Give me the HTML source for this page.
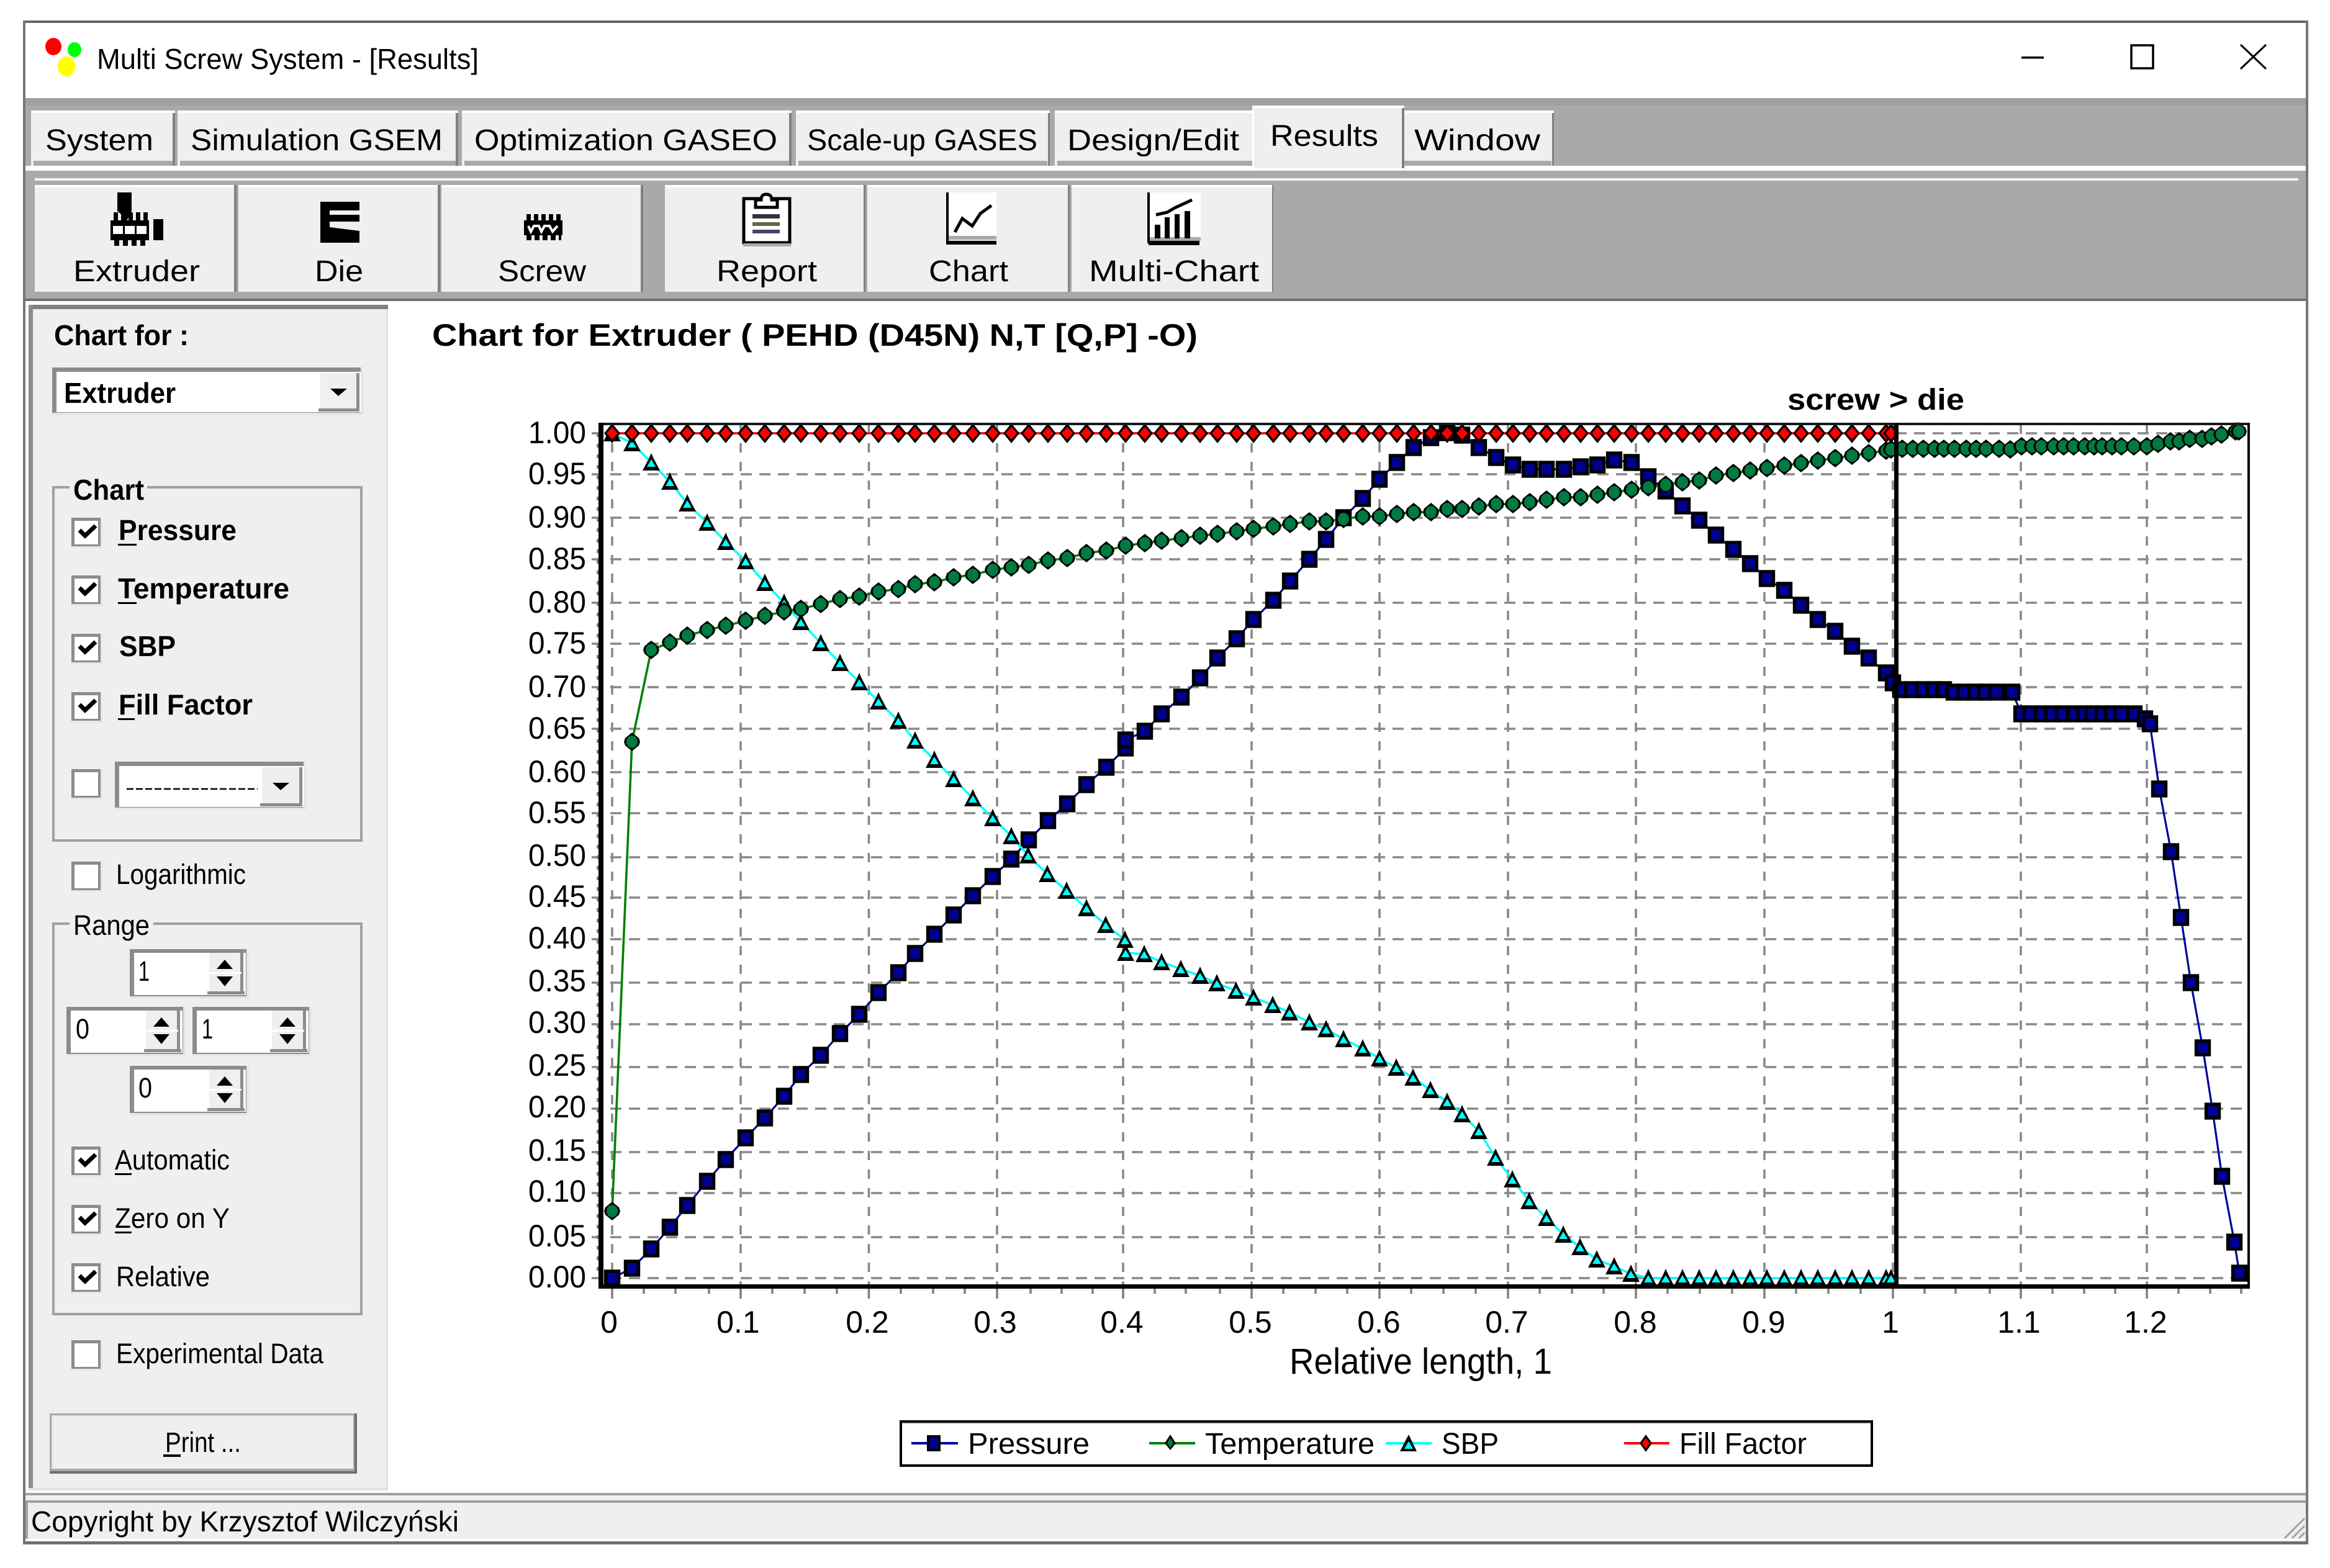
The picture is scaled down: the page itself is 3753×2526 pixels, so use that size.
<!DOCTYPE html>
<html lang="en"><head><meta charset="utf-8"><title>Multi Screw System - [Results]</title>
<style>
html,body{margin:0;padding:0;background:#fff;width:3753px;height:2526px;overflow:hidden}
svg{display:block}
text{font-family:"Liberation Sans","Noto Sans CJK SC",sans-serif;fill:#000}
.b{font-weight:bold}
</style></head><body>
<svg xmlns="http://www.w3.org/2000/svg" width="3753" height="2526" viewBox="0 0 3753 2526">
<defs>
<marker id="ms" markerUnits="userSpaceOnUse" markerWidth="30" markerHeight="30" refX="15" refY="15" overflow="visible"><rect x="4.5" y="4" width="21" height="22" fill="#000090" stroke="#000" stroke-width="5.4"/></marker>
<marker id="mt" markerUnits="userSpaceOnUse" markerWidth="30" markerHeight="30" refX="15" refY="15" overflow="visible"><polygon points="15,0 19,9 29,28 1,28 11,9" fill="#000"/><polygon points="15,10 22,22 8,22" fill="#00ffff"/></marker>
<marker id="mg" markerUnits="userSpaceOnUse" markerWidth="30" markerHeight="30" refX="15" refY="15" overflow="visible"><polygon points="15,0 26,9 28,15 26,21 15,30 4,21 2,15 4,9" fill="#000"/><ellipse cx="15" cy="15" rx="9" ry="10" fill="#007a40"/></marker>
<marker id="mr" markerUnits="userSpaceOnUse" markerWidth="30" markerHeight="30" refX="15" refY="15" overflow="visible"><polygon points="15,-1 28,15 15,31 2,15" fill="#000"/><polygon points="15,5 24,15 15,25 6,15" fill="#ff0000"/></marker>
<g id="cb"><rect x="0" y="0" width="50" height="49" fill="#e6e6e6"/><rect x="0" y="0" width="47" height="46" fill="#8c8c8c"/><rect x="5" y="5" width="38" height="38" fill="#fff"/></g>
<g id="ck"><use href="#cb"/><polyline points="13,20 22,29 39,13" fill="none" stroke="#000" stroke-width="7"/></g>
<g id="spin"><rect x="0" y="0" width="192" height="80" fill="#e6e6e6"/><rect x="0" y="0" width="188" height="76" fill="#8c8c8c"/><rect x="7" y="6" width="180" height="68" fill="#fff"/><rect x="128" y="6" width="54" height="66" fill="#efefef"/><rect x="125" y="68" width="60" height="5" fill="#8c8c8c"/><rect x="178" y="6" width="5" height="66" fill="#8c8c8c"/><rect x="128" y="37" width="52" height="3" fill="#fff"/><polygon points="153,17 166,32 140,32" fill="#000"/><polygon points="140,44 166,44 153,60" fill="#000"/></g>
</defs>

<!-- window frame -->
<rect x="37" y="33" width="3681" height="2455" fill="#fff"/>
<rect x="37" y="33" width="3681" height="4" fill="#666"/>
<rect x="37" y="33" width="4" height="2455" fill="#777"/>
<rect x="3714" y="33" width="4" height="2455" fill="#777"/>

<!-- title bar -->
<ellipse cx="86" cy="75" rx="13" ry="14" fill="#ff0000"/>
<ellipse cx="120" cy="80" rx="11" ry="12" fill="#00ff00"/>
<ellipse cx="107" cy="107" rx="14" ry="16" fill="#ffff00"/>
<text x="156" y="111" font-size="46" textLength="615" lengthAdjust="spacingAndGlyphs">Multi Screw System - [Results]</text>
<rect x="3256" y="91" width="36" height="3.5" fill="#000"/>
<rect x="3433" y="73" width="35" height="37" fill="none" stroke="#000" stroke-width="3.5"/>
<path d="M3609 72L3650 111M3650 72L3609 111" stroke="#000" stroke-width="3" fill="none"/>

<!-- grey menu and toolbar area -->
<rect x="41" y="158" width="3673" height="323" fill="#a9a9a9"/>
<rect x="41" y="158" width="3673" height="12" fill="#a0a0a0"/>
<rect x="41" y="267" width="3673" height="8" fill="#fff"/>
<rect x="56" y="287" width="3646" height="4" fill="#f4f4f4"/>
<rect x="41" y="481" width="3673" height="4" fill="#707070"/>

<!-- tabs -->
<g fill="#efefef">
<rect x="50" y="178" width="232" height="89"/><rect x="286" y="178" width="452" height="89"/><rect x="744" y="178" width="531" height="89"/><rect x="1282" y="178" width="409" height="89"/><rect x="1699" y="178" width="318" height="89"/><rect x="2262" y="178" width="241" height="89"/>
<rect x="2017" y="170" width="245" height="101"/>
</g>
<g fill="#fff">
<rect x="50" y="178" width="232" height="4"/><rect x="286" y="178" width="452" height="4"/><rect x="744" y="178" width="531" height="4"/><rect x="1282" y="178" width="409" height="4"/><rect x="1699" y="178" width="318" height="4"/><rect x="2262" y="178" width="241" height="4"/><rect x="2017" y="170" width="245" height="4"/><rect x="2017" y="170" width="3" height="101"/>
</g>
<g fill="#a9a9a9">
<rect x="54" y="259" width="224" height="8"/><rect x="290" y="259" width="444" height="8"/><rect x="748" y="259" width="523" height="8"/><rect x="1286" y="259" width="401" height="8"/><rect x="1703" y="259" width="314" height="8"/><rect x="2262" y="259" width="237" height="8"/>
</g>
<g fill="#808080">
<rect x="278" y="182" width="4" height="85"/><rect x="734" y="182" width="4" height="85"/><rect x="1271" y="182" width="4" height="85"/><rect x="1688" y="182" width="3" height="85"/><rect x="2258" y="174" width="4" height="97"/><rect x="2500" y="182" width="3" height="85"/>
</g>
<g font-size="48">
<text x="73" y="242" textLength="174" lengthAdjust="spacingAndGlyphs">System</text>
<text x="307" y="242" textLength="406" lengthAdjust="spacingAndGlyphs">Simulation GSEM</text>
<text x="764" y="242" textLength="488" lengthAdjust="spacingAndGlyphs">Optimization GASEO</text>
<text x="1300" y="242" textLength="371" lengthAdjust="spacingAndGlyphs">Scale-up GASES</text>
<text x="1719" y="242" textLength="277" lengthAdjust="spacingAndGlyphs">Design/Edit</text>
<text x="2046" y="235" textLength="174" lengthAdjust="spacingAndGlyphs">Results</text>
<text x="2278" y="242" textLength="203" lengthAdjust="spacingAndGlyphs">Window</text>
</g>

<!-- toolbar buttons -->
<g fill="#efefef">
<rect x="56" y="298" width="325" height="172"/><rect x="384" y="298" width="325" height="172"/><rect x="711" y="298" width="325" height="172"/><rect x="1071" y="298" width="323" height="172"/><rect x="1397" y="298" width="325" height="172"/><rect x="1726" y="298" width="325" height="172"/>
</g>
<g fill="#fff">
<rect x="56" y="298" width="325" height="4"/><rect x="384" y="298" width="325" height="4"/><rect x="711" y="298" width="325" height="4"/><rect x="1071" y="298" width="323" height="4"/><rect x="1397" y="298" width="325" height="4"/><rect x="1726" y="298" width="325" height="4"/>
</g>
<g fill="#808080">
<rect x="377" y="298" width="4" height="172"/><rect x="705" y="298" width="4" height="172"/><rect x="1032" y="298" width="4" height="172"/><rect x="1391" y="298" width="3" height="172"/><rect x="1720" y="298" width="3" height="172"/><rect x="2049" y="298" width="2" height="172"/>
</g>
<g font-size="48">
<text x="118" y="453" textLength="204" lengthAdjust="spacingAndGlyphs">Extruder</text>
<text x="507" y="453" textLength="78" lengthAdjust="spacingAndGlyphs">Die</text>
<text x="802" y="453" textLength="142" lengthAdjust="spacingAndGlyphs">Screw</text>
<text x="1154" y="453" textLength="162" lengthAdjust="spacingAndGlyphs">Report</text>
<text x="1496" y="453" textLength="128" lengthAdjust="spacingAndGlyphs">Chart</text>
<text x="1754" y="453" textLength="274" lengthAdjust="spacingAndGlyphs">Multi-Chart</text>
</g>

<!-- extruder icon -->
<rect x="189" y="310" width="23" height="30"/>
<polygon points="189,340 212,340 203,358 198,350 198,348"/>
<path d="M183 349H238" stroke="#000" stroke-width="14" stroke-dasharray="7 5" fill="none"/>
<rect x="178" y="355" width="62" height="32"/>
<path d="M184 390H238" stroke="#000" stroke-width="12" stroke-dasharray="8 6" fill="none"/>
<g fill="#fff"><rect x="182" y="364" width="16" height="13"/><rect x="201" y="364" width="16" height="13"/><rect x="220" y="364" width="16" height="13"/></g>
<rect x="247" y="353" width="16" height="34"/>

<!-- die icon -->
<rect x="516" y="325" width="63" height="14"/>
<rect x="516" y="339" width="15" height="34"/>
<rect x="531" y="346" width="48" height="11"/>
<polygon points="516,372 531,366 579,372 579,391 516,391"/>

<!-- screw icon -->
<path d="M848 350H904" stroke="#000" stroke-width="10" stroke-dasharray="7 5" fill="none"/>
<rect x="844" y="355" width="62" height="24"/>
<path d="M848 383H904" stroke="#000" stroke-width="8" stroke-dasharray="8 5" fill="none"/>
<polyline points="851,364 855,373 860,364 868,364 872,373 877,364 885,364 890,373 898,364" fill="none" stroke="#fff" stroke-width="4"/>

<!-- report icon -->
<rect x="1198" y="320" width="74" height="71" fill="#fff" stroke="#000" stroke-width="5"/>
<rect x="1197" y="392" width="77" height="5" fill="#a9a9a9"/>
<path d="M1217 334V322H1226Q1226 313 1234 313Q1243 313 1243 322H1252V334Z" fill="#fff" stroke="#000" stroke-width="5"/>
<rect x="1212" y="345" width="44" height="7" fill="#333340"/>
<rect x="1212" y="358" width="44" height="6" fill="#666640"/>
<rect x="1212" y="370" width="44" height="6" fill="#444466"/>

<!-- chart icon -->
<rect x="1526" y="310" width="79" height="74" fill="#fff"/>
<rect x="1526" y="380" width="79" height="6" fill="#a9a9a9"/>
<rect x="1524" y="310" width="4" height="80"/>
<rect x="1524" y="388" width="81" height="6"/>
<polyline points="1538,374 1550,352 1566,364 1579,344 1597,331" fill="none" stroke="#000" stroke-width="5"/>

<!-- multi chart icon -->
<rect x="1851" y="310" width="83" height="74" fill="#fff"/>
<rect x="1850" y="382" width="84" height="6" fill="#a9a9a9"/>
<rect x="1848" y="310" width="4" height="82"/>
<rect x="1850" y="388" width="82" height="7"/>
<g><rect x="1860" y="362" width="9" height="22"/><rect x="1876" y="350" width="8" height="34"/><rect x="1892" y="345" width="8" height="39"/><rect x="1908" y="340" width="9" height="44"/></g>
<polyline points="1862,346 1880,342 1892,335 1920,322" fill="none" stroke="#000" stroke-width="5"/>

<!-- left panel -->
<rect x="46" y="491" width="579" height="1910" fill="#efefef"/>
<rect x="46" y="491" width="579" height="7" fill="#808080"/>
<rect x="46" y="491" width="7" height="1910" fill="#8c8c8c"/>
<rect x="622" y="498" width="3" height="1903" fill="#e2e2e2"/>
<rect x="46" y="2397" width="579" height="4" fill="#e2e2e2"/>
<text x="87" y="556" font-size="46" textLength="217" lengthAdjust="spacingAndGlyphs" font-weight="bold">Chart for :</text>

<!-- combo 1 -->
<rect x="84" y="592" width="501" height="77" fill="#e6e6e6"/>
<rect x="84" y="592" width="497" height="73" fill="#8c8c8c"/>
<rect x="91" y="599" width="490" height="65" fill="#fff"/>
<rect x="516" y="601" width="58" height="61" fill="#efefef"/>
<rect x="513" y="658" width="66" height="5" fill="#8c8c8c"/>
<rect x="574" y="601" width="5" height="62" fill="#8c8c8c"/>
<polygon points="532,626 559,626 545,638"/>
<text x="103" y="649" font-size="46" font-weight="bold" textLength="180" lengthAdjust="spacingAndGlyphs">Extruder</text>

<!-- chart group -->
<rect x="86" y="785" width="496" height="569" fill="none" stroke="#a0a0a0" stroke-width="4"/>
<rect x="112" y="775" width="125" height="18" fill="#efefef"/>
<text x="118" y="805" font-size="46" font-weight="bold" textLength="114" lengthAdjust="spacingAndGlyphs">Chart</text>
<use href="#ck" x="115" y="834"/>
<use href="#ck" x="115" y="927"/>
<use href="#ck" x="115" y="1021"/>
<use href="#ck" x="115" y="1115"/>
<use href="#cb" x="115" y="1239"/>
<g font-size="46" font-weight="bold">
<text x="191" y="870" textLength="190" lengthAdjust="spacingAndGlyphs">Pressure</text>
<text x="190" y="964" textLength="276" lengthAdjust="spacingAndGlyphs">Temperature</text>
<text x="192" y="1057" textLength="91" lengthAdjust="spacingAndGlyphs">SBP</text>
<text x="191" y="1151" textLength="216" lengthAdjust="spacingAndGlyphs">Fill Factor</text>
</g>
<rect x="190" y="876" width="30" height="3"/><rect x="190" y="970" width="30" height="3"/><rect x="190" y="1157" width="27" height="3"/>

<!-- combo 2 -->
<rect x="185" y="1227" width="308" height="78" fill="#e6e6e6"/>
<rect x="185" y="1227" width="304" height="74" fill="#8c8c8c"/>
<rect x="192" y="1234" width="297" height="66" fill="#fff"/>
<rect x="422" y="1236" width="60" height="62" fill="#efefef"/>
<rect x="419" y="1294" width="68" height="5" fill="#8c8c8c"/>
<rect x="482" y="1236" width="5" height="63" fill="#8c8c8c"/>
<polygon points="439,1261 466,1261 452,1273"/>
<path d="M204 1271H415" stroke="#000" stroke-width="2.6" stroke-dasharray="11 4" fill="none"/>

<use href="#cb" x="115" y="1388"/>
<text x="187" y="1424" font-size="45" textLength="209" lengthAdjust="spacingAndGlyphs">Logarithmic</text>

<!-- range group -->
<rect x="86" y="1488" width="496" height="629" fill="none" stroke="#a0a0a0" stroke-width="4"/>
<rect x="112" y="1478" width="135" height="18" fill="#efefef"/>
<text x="118" y="1506" font-size="45" textLength="123" lengthAdjust="spacingAndGlyphs">Range</text>
<use href="#spin" x="209" y="1529"/>
<use href="#spin" x="107" y="1622"/>
<use href="#spin" x="310" y="1622"/>
<use href="#spin" x="209" y="1717"/>
<g font-size="45">
<text x="223" y="1580" textLength="18" lengthAdjust="spacingAndGlyphs">1</text>
<text x="122" y="1673" textLength="22" lengthAdjust="spacingAndGlyphs">0</text>
<text x="325" y="1673" textLength="18" lengthAdjust="spacingAndGlyphs">1</text>
<text x="223" y="1768" textLength="22" lengthAdjust="spacingAndGlyphs">0</text>
</g>
<use href="#ck" x="115" y="1847"/>
<use href="#ck" x="115" y="1941"/>
<use href="#ck" x="115" y="2035"/>
<g font-size="45">
<text x="185" y="1884" textLength="185" lengthAdjust="spacingAndGlyphs">Automatic</text>
<text x="185" y="1978" textLength="185" lengthAdjust="spacingAndGlyphs">Zero on Y</text>
<text x="187" y="2072" textLength="151" lengthAdjust="spacingAndGlyphs">Relative</text>
</g>
<rect x="185" y="1890" width="27" height="3"/><rect x="185" y="1984" width="27" height="3"/>
<use href="#cb" x="115" y="2159"/>
<text x="187" y="2196" font-size="45" textLength="334" lengthAdjust="spacingAndGlyphs">Experimental Data</text>

<!-- print button -->
<rect x="80" y="2277" width="495" height="97" fill="#707070"/>
<rect x="80" y="2277" width="491" height="93" fill="#a9a9a9"/>
<rect x="83" y="2280" width="486" height="86" fill="#e2e2e2"/>
<rect x="85" y="2282" width="484" height="84" fill="#efefef"/>
<text x="266" y="2339" font-size="45" textLength="122" lengthAdjust="spacingAndGlyphs">Print ...</text>
<rect x="263" y="2343" width="28" height="4"/>

<!-- chart heading -->
<text x="696" y="557" font-size="50" font-weight="bold" textLength="1233" lengthAdjust="spacingAndGlyphs">Chart for Extruder ( PEHD (D45N) N,T [Q,P] -O)</text>
<text x="2879" y="660" font-size="48" font-weight="bold" textLength="285" lengthAdjust="spacingAndGlyphs">screw &gt; die</text>

<!-- grid -->
<path d="M953 698H3620M953 764H3620M953 834H3620M953 901H3620M953 971H3620M953 1037H3620M953 1107H3620M953 1174H3620M953 1244H3620M953 1310H3620M953 1381H3620M953 1446H3620M953 1513H3620M953 1583H3620M953 1650H3620M953 1719H3620M953 1786H3620M953 1856H3620M953 1922H3620M953 1993H3620M953 2059H3620" stroke="#888" stroke-width="3.6" stroke-dasharray="18 12" fill="none"/>
<path d="M986 684V2092M1193 684V2092M1399.5 684V2092M1606 684V2092M1809 684V2092M2016 684V2092M2222 684V2092M2429 684V2092M2635 684V2092M2842 684V2092M3049 684V2092M3255 684V2092M3458 684V2092" stroke="#888" stroke-width="3.6" stroke-dasharray="15 15" fill="none"/>
<path d="M963 698V2059" stroke="#808080" stroke-width="4" stroke-dasharray="6 11" fill="none"/>
<path d="M1037 2076v8M1088 2076v8M1142 2076v8M1244 2076v8M1296 2076v8M1348 2076v8M1451 2076v8M1503 2076v8M1554 2076v8M1660 2076v8M1710 2076v8M1760 2076v8M1860 2076v8M1910 2076v8M1965 2076v8M2067 2076v8M2119 2076v8M2170 2076v8M2273 2076v8M2325 2076v8M2377 2076v8M2480 2076v8M2532 2076v8M2583 2076v8M2686 2076v8M2738 2076v8M2790 2076v8M2893 2076v8M2945 2076v8M2997 2076v8M3100 2076v8M3150 2076v8M3205 2076v8M3306 2076v8M3357 2076v8M3407 2076v8M3509 2076v8M3560 2076v8M3610 2076v8" stroke="#808080" stroke-width="3.6" fill="none"/>
<path d="M986 2076V2092M1193 2076V2092M1399.5 2076V2092M1606 2076V2092M1809 2076V2092M2016 2076V2092M2222 2076V2092M2429 2076V2092M2635 2076V2092M2842 2076V2092M3049 2076V2092M3255 2076V2092M3458 2076V2092" stroke="#808080" stroke-width="3.6" fill="none"/>

<!-- Pressure -->
<polyline fill="none" stroke="#000099" stroke-width="3.2" marker-start="url(#ms)" marker-mid="url(#ms)" marker-end="url(#ms)" points="986,2059 1018,2043 1049,2012 1079,1977 1107,1942 1139,1903 1169,1868 1201,1833 1232,1801 1263,1766 1290,1731 1322,1700 1353,1665 1384,1634 1415,1599 1447,1567 1474,1536 1505,1505 1536,1474 1567,1443 1599,1412 1629,1384 1657,1353 1688,1322 1719,1295 1750,1264 1782,1236 1813,1205 1813,1192 1844,1178 1871,1150 1903,1123 1933,1092 1961,1060 1992,1029 2019,998 2051,967 2078,936 2109,901 2136,869 2164,834 2195,803 2222,772 2250,745 2277,721 2305,705 2331,697 2355,701 2382,721 2410,737 2437,749 2464,756 2491,756 2519,756 2546,752 2573,749 2600,741 2628,745 2655,768 2683,791 2710,815 2737,838 2764,862 2792,885 2819,908 2846,932 2874,951 2901,975 2928,998 2956,1017 2983,1041 3010,1060 3038,1084 3049,1100 3061,1111 3080,1111 3098,1111 3115,1111 3131,1111 3147,1115 3165,1115 3182,1115 3198,1115 3216,1115 3241,1115 3256,1150 3271,1150 3289,1150 3306,1150 3323,1150 3341,1150 3358,1150 3371,1150 3387,1150 3402,1150 3417,1150 3438,1150 3455,1158 3463,1166 3478,1271 3497,1372 3513,1478 3529,1583 3548,1688 3564,1790 3579,1895 3599,2001 3607,2051"/>

<!-- SBP -->
<polyline fill="none" stroke="#00ffff" stroke-width="3.6" marker-start="url(#mt)" marker-mid="url(#mt)" marker-end="url(#mt)" points="986,698 1018,714 1049,745 1079,776 1107,811 1139,842 1169,873 1201,904 1232,939 1263,971 1290,1002 1322,1036 1353,1068 1384,1099 1415,1130 1447,1161 1474,1193 1505,1224 1536,1255 1567,1286 1599,1318 1629,1347 1656,1378 1687,1408 1718,1435 1750,1463 1781,1490 1812,1514 1813,1535 1843,1537 1871,1550 1902,1561 1933,1572 1960,1584 1991,1596 2019,1607 2050,1619 2077,1631 2109,1647 2136,1658 2164,1674 2195,1689 2222,1705 2249,1720 2276,1736 2304,1756 2331,1775 2355,1795 2382,1822 2409,1865 2436,1900 2463,1935 2491,1962 2518,1989 2545,2009 2572,2029 2600,2040 2627,2052 2655,2059 2683,2059 2710,2059 2737,2059 2764,2059 2792,2059 2819,2059 2846,2059 2874,2059 2901,2059 2928,2059 2956,2059 2983,2059 3010,2059 3038,2059 3046,2059"/>

<!-- Temperature -->
<polyline fill="none" stroke="#008000" stroke-width="3.6" marker-start="url(#mg)" marker-mid="url(#mg)" marker-end="url(#mg)" points="986,1951 1018,1195 1049,1047 1079,1035 1107,1024 1139,1015 1169,1008 1201,1000 1232,992 1263,985 1290,981 1322,973 1353,965 1384,961 1415,953 1447,949 1474,941 1505,938 1536,930 1567,926 1599,918 1629,914 1657,910 1688,903 1719,899 1750,891 1782,887 1813,879 1844,875 1871,871 1903,867 1933,863 1961,860 1992,856 2019,852 2051,848 2078,844 2109,840 2136,840 2164,836 2195,832 2222,832 2250,828 2277,825 2305,825 2331,820 2355,820 2382,816 2410,812 2437,812 2464,809 2491,805 2519,801 2546,801 2573,797 2600,793 2628,789 2655,785 2683,781 2710,777 2737,774 2764,766 2792,762 2819,758 2846,754 2874,750 2901,746 2928,742 2956,738 2983,734 3010,730 3038,726 3046,724 3064,723 3081,723 3098,723 3116,723 3131,723 3148,723 3167,723 3183,723 3199,723 3220,723 3238,724 3256,719 3273,719 3288,719 3308,719 3324,719 3340,719 3358,719 3373,719 3386,719 3402,719 3417,719 3437,719 3458,719 3476,715 3496,711 3510,711 3527,707 3547,707 3562,703 3578,700 3601,695 3606,695"/>

<!-- Fill factor -->
<polyline fill="none" stroke="#ff0000" stroke-width="3.6" marker-start="url(#mr)" marker-mid="url(#mr)" marker-end="url(#mr)" points="986,698 1018,698 1049,698 1079,698 1107,698 1139,698 1169,698 1201,698 1232,698 1263,698 1290,698 1322,698 1353,698 1384,698 1415,698 1447,698 1474,698 1505,698 1536,698 1567,698 1599,698 1629,698 1657,698 1688,698 1719,698 1750,698 1782,698 1813,698 1844,698 1871,698 1903,698 1933,698 1961,698 1992,698 2019,698 2051,698 2078,698 2109,698 2136,698 2164,698 2195,698 2222,698 2250,698 2277,698 2305,698 2331,698 2355,698 2382,698 2410,698 2437,698 2464,698 2491,698 2519,698 2546,698 2573,698 2600,698 2628,698 2655,698 2683,698 2710,698 2737,698 2764,698 2792,698 2819,698 2846,698 2874,698 2901,698 2928,698 2956,698 2983,698 3010,698 3038,698 3046,698"/>

<!-- axes frame -->
<rect x="964" y="681" width="2660" height="4" fill="#1a1a1a"/>
<rect x="964" y="681" width="8" height="1395"/>
<rect x="964" y="2069" width="2660" height="7"/>
<rect x="3620" y="681" width="4" height="1395"/>
<rect x="3051" y="682" width="7" height="1390"/>

<!-- y labels -->
<g font-size="50">
<text x="851" y="714" textLength="93" lengthAdjust="spacingAndGlyphs">1.00</text>
<text x="851" y="780" textLength="93" lengthAdjust="spacingAndGlyphs">0.95</text>
<text x="851" y="850" textLength="93" lengthAdjust="spacingAndGlyphs">0.90</text>
<text x="851" y="917" textLength="93" lengthAdjust="spacingAndGlyphs">0.85</text>
<text x="851" y="987" textLength="93" lengthAdjust="spacingAndGlyphs">0.80</text>
<text x="851" y="1053" textLength="93" lengthAdjust="spacingAndGlyphs">0.75</text>
<text x="851" y="1123" textLength="93" lengthAdjust="spacingAndGlyphs">0.70</text>
<text x="851" y="1190" textLength="93" lengthAdjust="spacingAndGlyphs">0.65</text>
<text x="851" y="1260" textLength="93" lengthAdjust="spacingAndGlyphs">0.60</text>
<text x="851" y="1326" textLength="93" lengthAdjust="spacingAndGlyphs">0.55</text>
<text x="851" y="1395" textLength="93" lengthAdjust="spacingAndGlyphs">0.50</text>
<text x="851" y="1461" textLength="93" lengthAdjust="spacingAndGlyphs">0.45</text>
<text x="851" y="1528" textLength="93" lengthAdjust="spacingAndGlyphs">0.40</text>
<text x="851" y="1597" textLength="93" lengthAdjust="spacingAndGlyphs">0.35</text>
<text x="851" y="1664" textLength="93" lengthAdjust="spacingAndGlyphs">0.30</text>
<text x="851" y="1733" textLength="93" lengthAdjust="spacingAndGlyphs">0.25</text>
<text x="851" y="1800" textLength="93" lengthAdjust="spacingAndGlyphs">0.20</text>
<text x="851" y="1870" textLength="93" lengthAdjust="spacingAndGlyphs">0.15</text>
<text x="851" y="1936" textLength="93" lengthAdjust="spacingAndGlyphs">0.10</text>
<text x="851" y="2008" textLength="93" lengthAdjust="spacingAndGlyphs">0.05</text>
<text x="851" y="2074" textLength="93" lengthAdjust="spacingAndGlyphs">0.00</text>
</g>

<!-- x labels -->
<g font-size="50" text-anchor="middle">
<text x="981" y="2147">0</text><text x="1189" y="2147">0.1</text><text x="1397" y="2147">0.2</text><text x="1603" y="2147">0.3</text><text x="1807" y="2147">0.4</text><text x="2014" y="2147">0.5</text><text x="2221" y="2147">0.6</text><text x="2427" y="2147">0.7</text><text x="2634" y="2147">0.8</text><text x="2841" y="2147">0.9</text><text x="3045" y="2147">1</text><text x="3252" y="2147">1.1</text><text x="3456" y="2147">1.2</text>
</g>
<text x="2077" y="2213" font-size="58" textLength="423" lengthAdjust="spacingAndGlyphs">Relative length, 1</text>

<!-- legend -->
<rect x="1451" y="2290" width="1564" height="71" fill="#fff" stroke="#000" stroke-width="4"/>
<rect x="1453" y="2292" width="1560" height="2" fill="#ccc"/>
<rect x="1468" y="2323" width="75" height="4" fill="#000099"/>
<rect x="1493" y="2312" width="22" height="26"/><rect x="1497" y="2316" width="14" height="18" fill="#000090"/>
<rect x="1851" y="2323" width="74" height="4" fill="#008000"/>
<polygon points="1885,2311 1894,2325 1885,2336 1876,2325"/><polygon points="1885,2316 1890,2325 1885,2332 1880,2325" fill="#007a40"/>
<rect x="2232" y="2323" width="74" height="4" fill="#00ffff"/>
<polygon points="2269,2311 2282,2338 2255,2338"/><polygon points="2269,2322 2276,2334 2262,2334" fill="#00ffff"/>
<rect x="2616" y="2323" width="73" height="4" fill="#ff0000"/>
<polygon points="2651,2311 2661,2325 2651,2339 2641,2325"/><polygon points="2651,2316 2657,2325 2651,2334 2645,2325" fill="#ff0000"/>
<g font-size="48">
<text x="1559" y="2342" textLength="196" lengthAdjust="spacingAndGlyphs">Pressure</text>
<text x="1941" y="2342" textLength="273" lengthAdjust="spacingAndGlyphs">Temperature</text>
<text x="2322" y="2342" textLength="92" lengthAdjust="spacingAndGlyphs">SBP</text>
<text x="2705" y="2342" textLength="205" lengthAdjust="spacingAndGlyphs">Fill Factor</text>
</g>

<!-- status bar -->
<rect x="41" y="2405" width="3673" height="4" fill="#a0a0a0"/>
<rect x="41" y="2409" width="3673" height="70" fill="#efefef"/>
<rect x="41" y="2417" width="3673" height="4" fill="#a0a0a0"/>
<rect x="41" y="2417" width="4" height="62" fill="#a0a0a0"/>
<rect x="41" y="2479" width="3673" height="4" fill="#fff"/>
<rect x="37" y="2483" width="3681" height="5" fill="#707070"/>
<text x="50" y="2467" font-size="46" textLength="689" lengthAdjust="spacingAndGlyphs">Copyright by Krzysztof Wilczyński</text>
<path d="M3680 2478L3712 2446M3692 2478L3712 2458M3703 2478L3712 2469" stroke="#a0a0a0" stroke-width="3" fill="none"/>
</svg>
</body></html>
